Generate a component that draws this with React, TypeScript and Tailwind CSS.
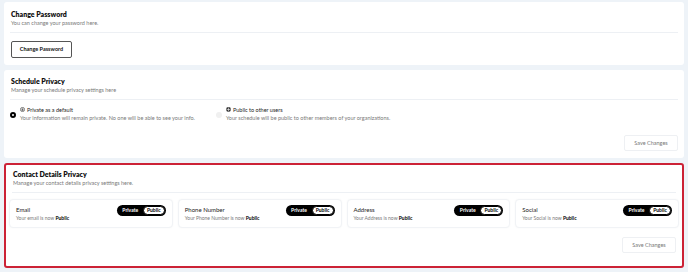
import { useState } from 'react'

const font = { fontFamily: 'Lato, "Noto Sans", sans-serif' }

function CardHeader({ title, subtitle }: { title: string; subtitle: string }) {
  return (
    <div className="border-b border-[#edf0f4] pb-[5px] px-[1px]">
      <h2 className="text-[7px] leading-[8px] font-extrabold text-[#111]">{title}</h2>
      <p className="mt-[2px] text-[5.5px] leading-[7px] text-[#7a7a7a]">{subtitle}</p>
    </div>
  )
}

function SaveButton() {
  return (
    <div className="flex justify-end">
      <button className="h-[16px] w-[54px] rounded-[2px] border border-[#eef0f3] bg-white text-[5.5px] text-[#777]">
        Save Changes
      </button>
    </div>
  )
}

function PrivacyToggle() {
  return (
    <div className="flex h-[11px] w-[49px] items-center rounded-full bg-black p-[1px] text-[5px] font-bold leading-none">
      <span className="flex-1 text-center text-white">Private</span>
      <span className="flex h-full w-[22px] items-center justify-center rounded-full border border-black bg-white text-black">
        Public
      </span>
    </div>
  )
}

const contactFields = ['Email', 'Phone Number', 'Address', 'Social']

export default function App() {
  const [schedule, setSchedule] = useState<'private' | 'public'>('private')

  return (
    <div className="flex h-[272px] flex-col gap-[5px] bg-[#eef3f8] px-[4px] pt-[2px]" style={font}>
      {/* パスワード */}
      <div className="rounded-[3px] bg-white px-[6px] pt-[8px] pb-[7px]">
        <CardHeader title="Change Password" subtitle="You can change your password here." />
        <button className="mt-[6px] ml-[1px] h-[17px] w-[61px] rounded-[2px] border border-[#555] text-[5.5px] font-bold text-[#111]">
          Change Password
        </button>
      </div>

      {/* スケジュール */}
      <div className="rounded-[3px] bg-white px-[6px] pt-[7px] pb-[7px]">
        <CardHeader title="Schedule Privacy" subtitle="Manage your schedule privacy settings here" />
        <div className="mt-[6px] flex gap-[12px]">
          <label className="flex w-[194px] cursor-pointer items-start gap-[4px]" onClick={() => setSchedule('private')}>
            <span
              className={`mt-[6px] h-[6px] w-[6px] shrink-0 rounded-full ${schedule === 'private' ? 'border-[2px] border-black bg-white' : 'bg-[#eee]'}`}
            />
            <div>
              <div className="flex items-center gap-[2px] text-[5.5px] leading-[8px] text-[#222]">
                <svg width="5" height="5" viewBox="0 0 10 10" fill="none" stroke="#333" strokeWidth="1.2">
                  <circle cx="5" cy="5" r="4.2" />
                  <rect x="3.3" y="4.6" width="3.4" height="2.6" fill="#333" stroke="none" />
                  <path d="M3.9 4.6V3.8a1.1 1.1 0 0 1 2.2 0v0.8" strokeWidth="0.8" />
                </svg>
                Private as a default
              </div>
              <p className="mt-[1px] text-[5.5px] leading-[7px] text-[#7a7a7a]">
                Your information will remain private. No one will be able to see your info.
              </p>
            </div>
          </label>
          <label className="flex cursor-pointer items-start gap-[4px]" onClick={() => setSchedule('public')}>
            <span
              className={`mt-[6px] h-[6px] w-[6px] shrink-0 rounded-full ${schedule === 'public' ? 'border-[2px] border-black bg-white' : 'bg-[#f0f0f0]'}`}
            />
            <div>
              <div className="flex items-center gap-[2px] text-[5.5px] leading-[8px] text-[#222]">
                <svg width="5" height="5" viewBox="0 0 10 10">
                  <circle cx="5" cy="5" r="4.8" fill="#333" />
                  <path d="M5 1v8M1 5h8" stroke="#fff" strokeWidth="1.1" />
                </svg>
                Public to other users
              </div>
              <p className="mt-[1px] text-[5.5px] leading-[7px] text-[#7a7a7a]">
                Your schedule will be public to other members of your organizations.
              </p>
            </div>
          </label>
        </div>
        <div className="mt-[13px]">
          <SaveButton />
        </div>
      </div>

      {/* 連絡先 */}
      <div className="rounded-[3px] border-[2px] border-[#cc2236] bg-white px-[2px] pt-[5px] pb-[13px]">
        <div className="px-[4px]">
          <CardHeader title="Contact Details Privacy" subtitle="Manage your contact details privacy settings here." />
        </div>
        <div className="mt-[6px] grid grid-cols-4 gap-[5px] px-[1px]">
          {contactFields.map((field) => (
            <div
              key={field}
              className="flex items-start justify-between rounded-[4px] border border-[#f1f3f6] bg-white px-[6px] pt-[5px] pb-[5px] shadow-[0_0_2px_rgba(0,0,0,0.04)]"
            >
              <div className="pt-[1px]">
                <div className="text-[6px] leading-[8px] text-[#222]">{field}</div>
                <p className="mt-[1px] text-[5px] leading-[7px] text-[#7a7a7a]">
                  Your {field === 'Email' ? 'email' : field} is now <span className="font-bold text-black">Public</span>
                </p>
              </div>
              <PrivacyToggle />
            </div>
          ))}
        </div>
        <div className="mt-[9px] px-[4px]">
          <SaveButton />
        </div>
      </div>
    </div>
  )
}
